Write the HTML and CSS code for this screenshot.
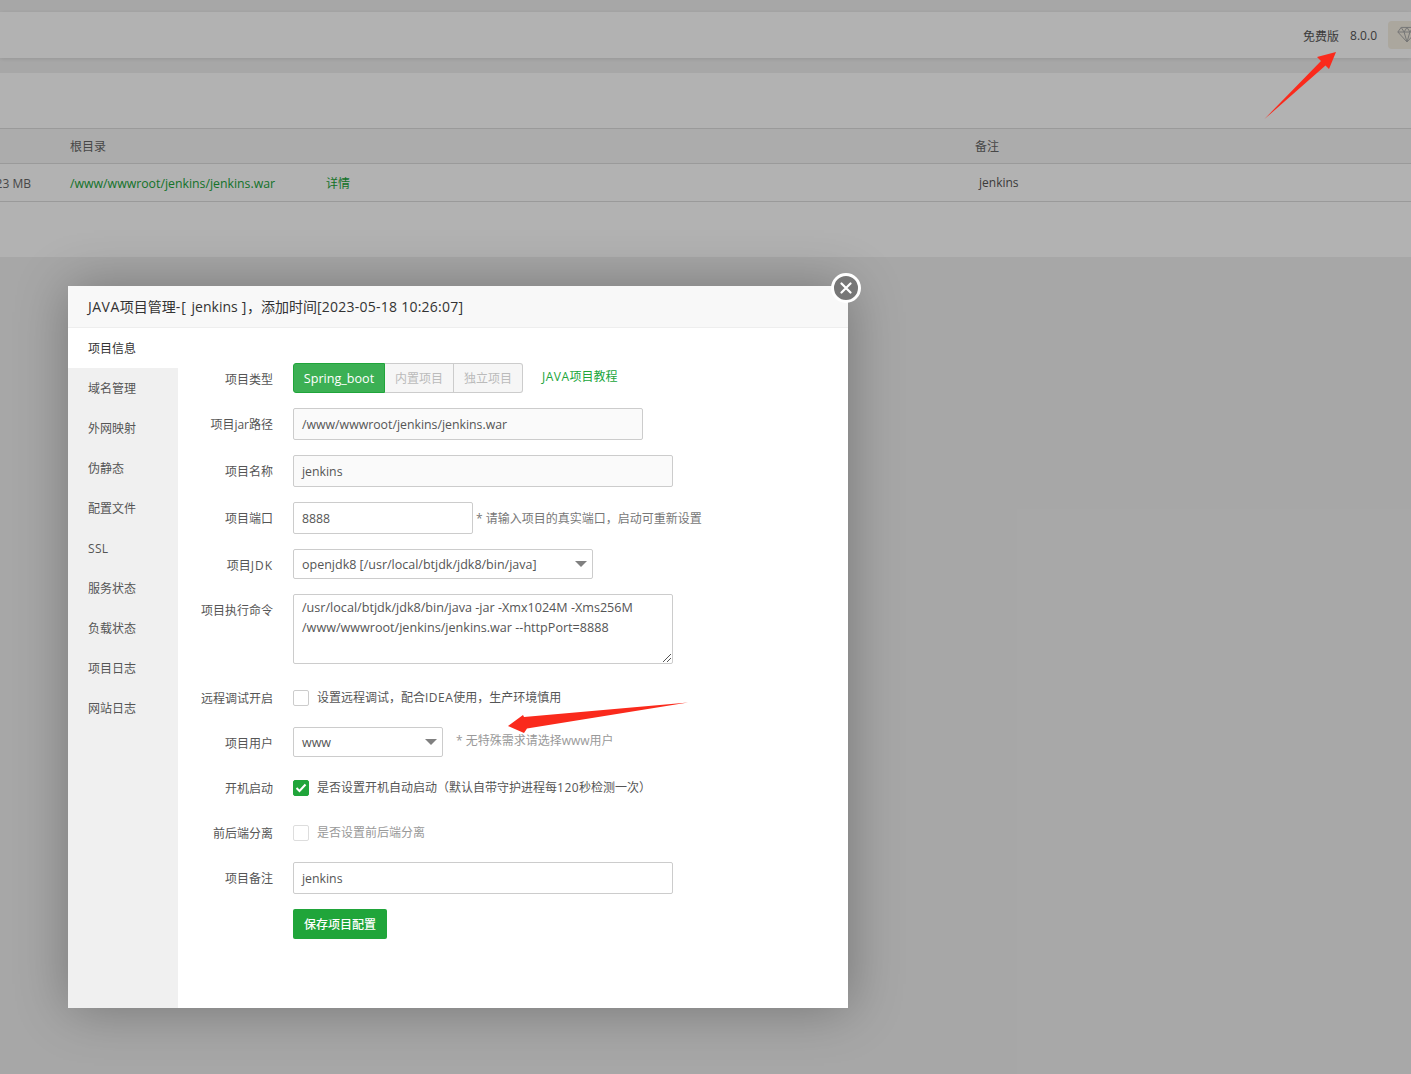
FILE: index.html
```html
<!DOCTYPE html>
<html lang="zh-CN">
<head>
<meta charset="utf-8">
<title>JAVA项目管理</title>
<link rel="stylesheet" href="styles.css">
</head>
<body>
<div class="page">
  <header class="topbar">
    <span class="edition">免费版</span>
    <span class="version">8.0.0</span>
    <span class="gem">
      <svg width="20" height="17" viewBox="0 0 24 20" fill="none" stroke="#aaa" stroke-width="1.200"><path d="M5 1.500h14l4 5.500-11 12L1 7z"/><path d="M1 7h22M8.500 7L12 19l3.500-12M8.500 7L12 1.500 15.500 7M5 1.500L8.500 7M19 1.500L15.500 7"/></svg>
    </span>
  </header>
  <section class="panel">
    <div class="toolbar"></div>
    <div class="thead">
      <div class="c0"></div><div class="c1">根目录</div><div class="c2"></div><div class="c3">备注</div>
    </div>
    <div class="trow">
      <div class="c0 size">23 MB</div>
      <div class="c1 path">/www/wwwroot/jenkins/jenkins.war</div>
      <div class="c2 link">详情</div>
      <div class="c3 note">jenkins</div>
    </div>
  </section>
</div>
<div class="shade"></div>

<div class="modal">
  <div class="modal-title"><span class="ls5">JAVA</span>项目管理<span class="ls10">-[ </span>jenkins<span class="ls5"> ]</span>，添加时间<span class="ls2">[2023-05-18 10:26:07]</span></div>
  <div class="modal-body">
    <nav class="side">
      <div class="tab active">项目信息</div>
      <div class="tab">域名管理</div>
      <div class="tab">外网映射</div>
      <div class="tab">伪静态</div>
      <div class="tab">配置文件</div>
      <div class="tab"><span class="ls3">SSL</span></div>
      <div class="tab">服务状态</div>
      <div class="tab">负载状态</div>
      <div class="tab">项目日志</div>
      <div class="tab">网站日志</div>
    </nav>
    <form class="form">
      <div class="row r-type">
        <label class="lbl">项目类型</label>
        <div class="seg">
          <span class="seg-btn on">Spring_boot</span><span class="seg-btn">内置项目</span><span class="seg-btn">独立项目</span>
        </div>
        <span class="tutorial"><span class="ls5">JAVA</span>项目教程</span>
      </div>
      <div class="row r-input">
        <label class="lbl lbl-flat">项目jar路径</label>
        <div class="box w350 ro">/www/wwwroot/jenkins/jenkins.war</div>
      </div>
      <div class="row r-input">
        <label class="lbl lbl-flat">项目名称</label>
        <div class="box w380 ro">jenkins</div>
      </div>
      <div class="row r-input">
        <label class="lbl lbl-flat">项目端口</label>
        <div class="box w180">8888</div>
        <span class="hint port-hint">* 请输入项目的真实端口，启动可重新设置</span>
      </div>
      <div class="row r-select">
        <label class="lbl">项目<span class="ls10">JDK</span></label>
        <div class="box sel w300">openjdk8 [/usr/local/btjdk/jdk8/bin/java]<i class="caret"></i></div>
      </div>
      <div class="row r-area">
        <label class="lbl lbl-top">项目执行命令</label>
        <div class="area">/usr/local/btjdk/jdk8/bin/java -jar -Xmx1024M -Xms256M<br>/www/wwwroot/jenkins/jenkins.war --httpPort=8888
          <svg class="grip" width="9" height="9" viewBox="0 0 9 9" stroke="#555" stroke-width="1"><path d="M1 9L9 1M5 9l4-4"/></svg>
        </div>
      </div>
      <div class="row r-check m19">
        <label class="lbl lbl-flat">远程调试开启</label>
        <span class="chk"></span>
        <span class="chk-text">设置远程调试，配合<span class="ls5">IDEA</span>使用，生产环境慎用</span>
      </div>
      <div class="row r-select m14">
        <label class="lbl">项目用户</label>
        <div class="box sel w150">www<i class="caret"></i></div>
        <span class="hint user-hint">* 无特殊需求请选择www用户</span>
      </div>
      <div class="row r-check m16">
        <label class="lbl lbl-flat">开机启动</label>
        <span class="chk on"><svg width="12" height="10" viewBox="0 0 12 10" fill="none" stroke="#fff" stroke-width="2"><path d="M1.500 5l3 3 6-6.500"/></svg></span>
        <span class="chk-text">是否设置开机自动启动（默认自带守护进程每<span class="ls5">120</span>秒检测一次）</span>
      </div>
      <div class="row r-check">
        <label class="lbl lbl-flat">前后端分离</label>
        <span class="chk dim"></span>
        <span class="chk-text muted">是否设置前后端分离</span>
      </div>
      <div class="row r-input m14">
        <label class="lbl lbl-flat">项目备注</label>
        <div class="box w380">jenkins</div>
      </div>
      <div class="row r-save">
        <span class="lbl"></span>
        <span class="save">保存项目配置</span>
      </div>
    </form>
  </div>
  <button class="close" type="button" aria-label="关闭">
    <svg width="12" height="12" viewBox="0 0 12 12" stroke="#fff" stroke-width="2.200" stroke-linecap="round"><path d="M1.500 1.500l9 9M10.500 1.500l-9 9"/></svg>
  </button>
</div>

<svg class="arrows" width="1411" height="1074" viewBox="0 0 1411 1074">
  <path fill="#fa2a1c" d="M1264.500 119L1321 61l-4-4 19-5-7 17-3.500-3.500z"/>
  <path fill="#fa2a1c" d="M688 702.500L524 717l-1-2-15 11 16 7 3-4.500z"/>
</svg>
</body>
</html>
```
FILE: styles.css
```css
* { box-sizing: border-box; }
html, body { margin: 0; height: 1074px; overflow: hidden; }
body {
  background: #f0f0f0;
  font-family: "Open Sans", "Noto Sans CJK SC", sans-serif;
  font-size: 12px;
  color: #555;
  position: relative;
}

/* tracking for Latin runs set among CJK text */
.ls2 { letter-spacing: .25px; }
.ls3 { letter-spacing: .3px; }
.ls5 { letter-spacing: .5px; }
.ls10 { letter-spacing: 1px; }

/* page behind the dialog */
.page { padding-top: 12px; }
.topbar {
  height: 46px;
  background: #fff;
  box-shadow: 0 1px 4px rgba(0,0,0,.1);
  display: flex;
  align-items: center;
  justify-content: flex-end;
  color: #555;
  overflow: hidden;
  padding-top: 1px;
}
.edition { margin-right: 11px; }
.version { margin-right: 11px; }
.gem {
  width: 23px;
  height: 28px;
  flex: none;
  border-radius: 4px 0 0 4px;
  background: #f5efe3;
  padding: 5px 0 0 9px;
  overflow: hidden;
  margin-top: -1px;
}
.gem svg { display: block; }
.panel { margin-top: 15px; height: 184px; background: #fff; }
.toolbar { height: 55px; }
.thead, .trow {
  display: grid;
  grid-template-columns: 70px 256px 649px 1fr;
  align-items: center;
  border-top: 1px solid #ddd;
}
.thead { height: 35px; background: #f6f6f6; color: #666; }
.trow { height: 39px; border-bottom: 1px solid #ddd; }
.size { display: flex; justify-content: flex-end; padding: 2px 39px 0 0; white-space: nowrap; color: #666; }
.path { color: #20a53a; white-space: nowrap; font-size: 12.300px; padding-top: 2px; }
.link { color: #20a53a; padding-top: 1px; }
.note { padding-left: 4px; }
.shade { position: absolute; inset: 0; background: rgba(0,0,0,.3); }

/* dialog */
.modal {
  position: absolute;
  left: 68px;
  top: 286px;
  width: 780px;
  height: 722px;
  background: #fff;
  box-shadow: 1px 1px 50px rgba(0,0,0,.3);
  display: flex;
  flex-direction: column;
}
.modal-title {
  height: 42px;
  flex: none;
  background: #f8f8f8;
  border-bottom: 1px solid #eee;
  padding-left: 20px;
  line-height: 41px;
  font-size: 14px;
  color: #333;
  white-space: pre;
}
.modal-body { flex: 1; display: flex; min-height: 0; }
.side { width: 110px; flex: none; background: #f0f0f0; }
.tab { height: 40px; line-height: 42px; padding-left: 20px; color: #555; }
.tab.active { background: #fff; color: #333; }
.form { flex: 1; padding-top: 35px; }

.row { display: flex; align-items: center; margin-top: 15px; }
.row:first-child { margin-top: 0; }
.m14 { margin-top: 14px; }
.m16 { margin-top: 16px; }
.m19 { margin-top: 19px; }
.r-type, .r-select, .r-check, .r-save { height: 30px; }
.r-input { height: 32px; }
.r-area { height: 70px; align-items: flex-start; }
.lbl { width: 95px; flex: none; margin-right: 20px; text-align: right; color: #555; white-space: nowrap; padding-top: 2px; }
.lbl-flat { padding-top: 0; }
.lbl-top { padding-top: 7px; }

.seg { display: flex; }
.seg-btn {
  height: 30px;
  line-height: 30px;
  padding: 0 10px;
  border: 1px solid #ccc;
  border-left: 0;
  background: #f6f6f6;
  color: #bbb;
}
.seg-btn:last-child { border-radius: 0 3px 3px 0; }
.seg-btn.on {
  width: 92px;
  padding: 0;
  text-align: center;
  background: #3cb054;
  border: 1px solid #20a53a;
  border-radius: 3px 0 0 3px;
  color: #fff;
  font-size: 12.600px;
  line-height: 30px;
}
.tutorial { margin: -5px 0 0 19px; color: #20a53a; }

.box {
  height: 100%;
  border: 1px solid #ccc;
  border-radius: 2px;
  padding-left: 8px;
  display: flex;
  align-items: center;
  color: #555;
  font-size: 12.300px;
  position: relative;
  white-space: nowrap;
}
.sel { font-size: 12.500px; }
.ro { background: #fafafa; }
.w150 { width: 150px; }
.w180 { width: 180px; }
.w300 { width: 300px; }
.w350 { width: 350px; }
.w380 { width: 380px; }
.caret {
  position: absolute;
  right: 5px;
  top: 11px;
  border: 6px solid transparent;
  border-top: 6px solid #808080;
  border-bottom: 0;
}
.area {
  width: 380px;
  height: 70px;
  border: 1px solid #ccc;
  border-radius: 2px;
  padding: 3px 8px;
  line-height: 20px;
  font-size: 12.600px;
  color: #555;
  position: relative;
  white-space: nowrap;
}
.grip { position: absolute; right: 1px; bottom: 1px; }
.hint { color: #999; }
.port-hint { margin-left: 3px; color: #777; }
.user-hint { margin: -4px 0 0 13px; }
.chk {
  width: 16px;
  height: 16px;
  flex: none;
  border: 1px solid #ccc;
  border-radius: 2px;
  background: #fff;
  display: flex;
  align-items: center;
  justify-content: center;
}
.chk.on { background: #20a53a; border-color: #20a53a; }
.chk.dim { border-color: #ddd; }
.chk-text { margin-left: 8px; color: #555; white-space: nowrap; margin-top: -2px; }
.muted { color: #999; }
.save {
  width: 94px;
  height: 30px;
  line-height: 32px;
  text-align: center;
  background: #20a53a;
  border-radius: 2px;
  color: #fff;
  font-weight: 500;
}
.close {
  position: absolute;
  right: -13px;
  top: -13px;
  width: 30px;
  height: 30px;
  padding: 0;
  border: 3px solid #fff;
  border-radius: 50%;
  background: #777;
  display: flex;
  align-items: center;
  justify-content: center;
}
.arrows { position: absolute; left: 0; top: 0; pointer-events: none; }
```
